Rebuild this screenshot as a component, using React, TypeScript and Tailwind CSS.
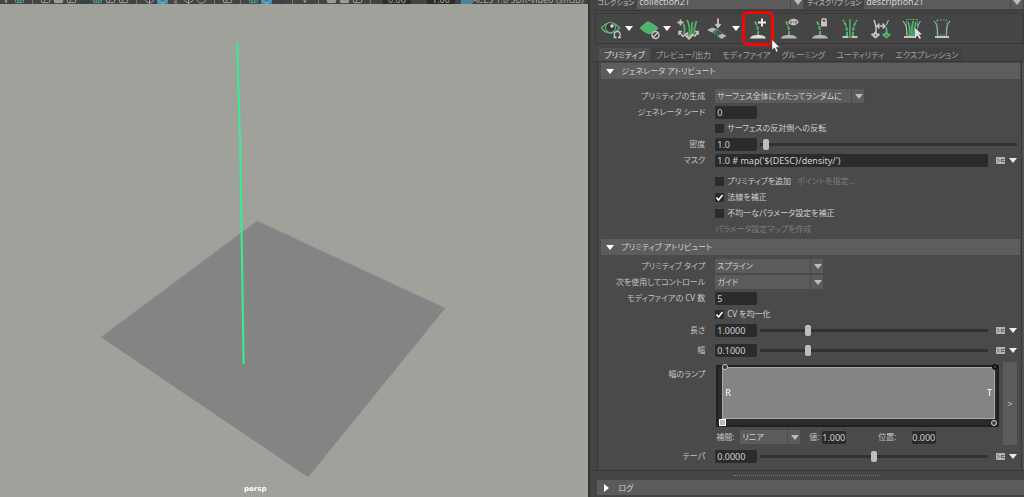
import { useState } from "react";
import type { ReactNode } from "react";
import { Box, Circle, Grid3x3, Image, Lightbulb, MousePointer2, Square } from "lucide-react";

const FONT = "font-['Noto_Sans','Noto_Sans_CJK_JP',sans-serif] [font-feature-settings:'palt']";

type Tool = "sep" | "box" | "grid" | "image" | "dark" | "teal" | "on" | "ball" | "light" | "pick";

const viewTools: Tool[] = [
  "pick", "teal", "sep", "image", "grid", "image", "dark", "teal", "image", "image", "sep", "box", "on", "light",
  "box", "ball", "sep", "image", "sep", "teal", "on", "dark", "sep", "pick", "sep", "grid", "grid", "image", "sep",
];

function ViewTool({ kind }: { kind: Tool }) {
  const size = 11;
  if (kind === "sep") return <span className="h-3 w-px bg-[#777]" />;
  if (kind === "on") {
    return (
      <span className="bg-[#4a83a3] text-[#6fd0d0]">
        <Circle size={size} />
      </span>
    );
  }
  if (kind === "teal") return <Grid3x3 size={size} className="text-[#4fa9a4]" />;
  if (kind === "box") return <Box size={size} />;
  if (kind === "grid") return <Square size={size} fill="#999" />;
  if (kind === "image") return <Image size={size} />;
  if (kind === "dark") return <Square size={size} className="text-[#2d3a40]" />;
  if (kind === "ball") return <Circle size={size} />;
  if (kind === "light") return <Lightbulb size={size} />;
  return <MousePointer2 size={size} />;
}

function Viewport() {
  return (
    <main className="relative flex min-w-0 flex-col bg-[#a1a19c]">
      <div className="flex h-1 shrink-0 items-end overflow-hidden bg-[#434343] text-[9px] leading-[9px] text-[#a8a8a8]">
        {viewTools.map((kind, i) => (
          <span key={i} className="flex w-[13px] shrink-0 justify-center">
            <ViewTool kind={kind} />
          </span>
        ))}
        <span className="ml-1.5 w-7 shrink-0 bg-[#2b2b2b] text-center">0.00</span>
        <span className="ml-4 w-7 shrink-0 bg-[#2b2b2b] text-center">1.00</span>
        <span className="ml-1.5 h-3 w-[11px] shrink-0 bg-[#4a83a3]" />
        <span className="shrink-0">ACES 1.0 SDR-video (sRGB)</span>
      </div>
      <svg viewBox="0 4 588 493" className="min-h-0 w-full flex-1">
        <polygon points="257,221 445,308 308,477 101,337" fill="#858484" />
        <polyline points="101,337 257,221 445,308" fill="none" stroke="#8b9094" strokeWidth="1" />
        <path d="M237 43 L240 140 L243.500 363" fill="none" stroke="#35ee94" strokeWidth="2" strokeLinecap="round" />
      </svg>
      <span className="absolute bottom-0 left-[244px] font-['DejaVu_Sans'] text-[7px] leading-4 font-bold text-white">
        persp
      </span>
    </main>
  );
}

function Down({ className = "" }: { className?: string }) {
  return (
    <svg viewBox="0 0 8 5" className={`h-[5px] w-2 shrink-0 ${className}`}>
      <path d="M0 0H8L4 5Z" fill="currentColor" />
    </svg>
  );
}

type SelectProps = { id: string; value: string; className?: string };

function Select({ id, value, className = "" }: SelectProps) {
  return (
    <div className={`relative h-3.5 bg-[#5b5b5b] ${className}`}>
      <select
        id={id}
        defaultValue={value}
        className="h-full w-full appearance-none border-r border-[#484848] px-0.5 leading-[14px] text-[#d0d0d0] outline-none"
      >
        <option>{value}</option>
      </select>
      <span className="pointer-events-none absolute inset-y-0 right-0 flex w-3.5 items-center justify-center border-l border-[#4b4b4b]">
        <Down className="text-[#bbb]" />
      </span>
    </div>
  );
}

function Field({ id, value, className = "w-[42px] px-0.5" }: { id: string; value: string; className?: string }) {
  return (
    <input
      id={id}
      defaultValue={value}
      className={`h-[13px] min-w-0 rounded-xs bg-[#2b2b2b] text-[9px] leading-[13px] text-[#d0d0d0] outline-none ${className}`}
    />
  );
}

function Slider({ label, value }: { label: string; value: number }) {
  return (
    <input
      type="range"
      aria-label={label}
      defaultValue={value}
      className="ml-[3px] h-[11px] min-w-0 flex-1 appearance-none bg-[linear-gradient(#313131,#313131)] bg-[length:100%_3px] bg-center bg-no-repeat [&::-webkit-slider-thumb]:h-[11px] [&::-webkit-slider-thumb]:w-[6px] [&::-webkit-slider-thumb]:appearance-none [&::-webkit-slider-thumb]:rounded-xs [&::-webkit-slider-thumb]:bg-[#bdbdbd]"
    />
  );
}

function MapMenu() {
  return (
    <>
      <button aria-label="map" className="ml-2 shrink-0">
        <svg viewBox="0 0 9 7" className="h-[7px] w-[9px]">
          <rect width="9" height="7" fill="#b4b4b4" />
          <path d="M1 1.500L3 3.500L1 5.500M8.500 2.500H5.500V4.500H8.500" fill="none" stroke="#4a4a4a" strokeWidth="0.800" />
        </svg>
      </button>
      <button aria-label="menu" className="ml-1 shrink-0">
        <Down className="text-[#eee]" />
      </button>
    </>
  );
}

function Row({ label, id, children }: { label?: string; id?: string; children: ReactNode }) {
  return (
    <div className="grid h-4 grid-cols-[104px_1fr] items-center gap-x-2.5">
      {label ? (
        <label htmlFor={id} className="text-right whitespace-nowrap">
          {label}
        </label>
      ) : (
        <span />
      )}
      <div className="flex min-w-0 items-center">{children}</div>
    </div>
  );
}

function Check({ label, checked = false }: { label: string; checked?: boolean }) {
  const [on, setOn] = useState(checked);
  return (
    <label className="flex items-center gap-[3px] whitespace-nowrap text-[#d0d0d0]">
      <span className="relative size-[9px] bg-[#2b2b2b]">
        <input
          type="checkbox"
          checked={on}
          onChange={() => setOn(!on)}
          className="absolute inset-0 size-full appearance-none"
        />
        {on && (
          <svg viewBox="0 0 9 9" className="pointer-events-none absolute inset-0 size-full">
            <path d="M1.500 4.500L3.500 7L7.500 2" fill="none" stroke="#fff" strokeWidth="1.500" />
          </svg>
        )}
      </span>
      {label}
    </label>
  );
}

function SectionTitle({ children }: { children: string }) {
  return (
    <h2 className="flex h-4 items-center gap-[7px] bg-[#5d5d5d] pl-[5px] text-[#d4d4d4]">
      <Down className="text-white" />
      {children}
    </h2>
  );
}

const GREEN = "#4fb36a";

function Icon({ children }: { children: ReactNode }) {
  return (
    <svg viewBox="0 0 24 24" className="size-6 shrink-0" fill="none" stroke="#c4c4c4" strokeWidth="1.500">
      {children}
    </svg>
  );
}

function Mound({ fill = "#b5b5b5" }: { fill?: string }) {
  return <path d="M4 21.500C5 18.500 8 18 12 18S19 18.500 20 21.500Z" fill={fill} stroke="none" />;
}

function Blade() {
  return <path d="M12 18C12.500 13 11.500 8 8.500 4" stroke={GREEN} strokeWidth="2" strokeDasharray="4 1" />;
}

function Toolbar() {
  return (
    <div className="relative mt-0.5 ml-[5px] flex h-[31px] shrink-0 items-center border border-[#393939] bg-[#454545] pl-1">
      <button aria-label="preview" className="flex w-[38px] shrink-0 items-center gap-px">
        <Icon>
          <path d="M1.500 11C6 4.500 15 4.500 19.500 11C15 17.500 6 17.500 1.500 11Z" stroke={GREEN} strokeWidth="1.500" />
          <circle cx="10.500" cy="10.500" r="5" fill="#3c3c3c" stroke="#8fae98" strokeWidth="1" />
          <circle cx="12" cy="9" r="1.700" fill="#ddd" stroke="none" />
          <path d="M15.500 20.500C13 17.500 14.500 14.500 17.500 14.500S21.500 18 18.500 20.500M13.500 20.500H16.500M21 20.500H18" strokeWidth="1.300" />
        </Icon>
        <Down className="text-white" />
      </button>
      <button aria-label="clear preview" className="flex w-[38px] shrink-0 items-center gap-px">
        <Icon>
          <path d="M1.500 11C6 7 8 4.500 10 4.500S16 7 20.500 11C17 15 13 17 11 17S6 15 1.500 11Z" fill={GREEN} stroke="none" />
          <circle cx="17.500" cy="18" r="3.500" fill="#454545" />
          <path d="M15 20.500L20 15.500" />
        </Icon>
        <Down className="text-white" />
      </button>
      <button aria-label="add guides" className="w-7 shrink-0">
        <Icon>
          <path d="M3 14.500L7 19.500L11 16L13 21.500L16 17L19 19L22 14.500M3 18V14.500H6M22 18V14.500H19M9 18L13 22L17 18" strokeWidth="1.500" />
          <path d="M8 17C9 13 9 10 7.500 7M13 20C14 14 14 8 11 3M18 17C18 13 18.500 9 20.500 4M15.500 17C16 12 15.500 8 16.500 5" stroke={GREEN} strokeWidth="1.800" />
          <path d="M1.500 5.500H7.500M4.500 2.500V8.500" strokeWidth="1.800" />
        </Icon>
      </button>
      <button aria-label="place guides" className="flex w-[39px] shrink-0 items-center gap-1">
        <Icon>
          <path d="M14 1.500V9M11.500 7L14 10L16.500 7" strokeWidth="1.800" />
          <path d="M3 13L8 10.500L13 12L8 15.500ZM13.500 19L18.500 16.500L22.500 19L17.500 22Z" fill="#b5b5b5" stroke="none" />
          <path d="M8 15L14 19M13 12L18.500 16.500M10 13.500L16 17.500M10 16L14 13" stroke={GREEN} strokeWidth="1" strokeDasharray="2 1" />
        </Icon>
        <Down className="text-white" />
      </button>
      <button aria-label="add guide" className="relative flex h-full w-[30px] shrink-0 items-center justify-center">
        <Icon>
          <Mound fill="#ddd" />
          <Blade />
          <path d="M12 5.500H20M16 1.500V9.500" stroke="#eee" strokeWidth="2" />
        </Icon>
        <span className="absolute -inset-x-px -inset-y-[3px] rounded-md border-[3px] border-[#f90400]" />
        <svg viewBox="0 0 9 14" className="absolute top-[25px] left-7 z-10 h-3.5 w-[9px]">
          <path d="M1 0.500V11L3.500 8.800L5.300 13L7 12.200L5.200 8.300H8.500Z" fill="#fff" stroke="#444" strokeWidth="0.500" />
        </svg>
      </button>
      <button aria-label="show guide" className="flex w-[31px] shrink-0 justify-center">
        <Icon>
          <Mound />
          <Blade />
          <path d="M12 5C14 1.500 19 1.500 21 5C19 8.500 14 8.500 12 5Z" />
          <circle cx="16.500" cy="5" r="1.500" />
        </Icon>
      </button>
      <button aria-label="lock guide" className="flex w-[31px] shrink-0 justify-center">
        <Icon>
          <Mound />
          <Blade />
          <rect x="13" y="4.500" width="6" height="5" fill="#c4c4c4" stroke="none" />
          <path d="M14 5V3.500C14 1.300 18 1.300 18 3.500V5" />
        </Icon>
      </button>
      <button aria-label="mirror" className="flex w-[30px] shrink-0 justify-center">
        <Icon>
          <path d="M4.500 20H10.500M13.500 20H19.500" strokeWidth="2" />
          <path d="M12 2V21" stroke={GREEN} strokeWidth="1.500" />
          <path d="M9 19C9.500 13 8 7 5 3M15 19C14.500 13 16 7 19 3" stroke={GREEN} strokeWidth="2" strokeDasharray="4 1" />
        </Icon>
      </button>
      <button aria-label="copy" className="flex w-[31px] shrink-0 justify-center">
        <Icon>
          <path d="M6.500 17C8 12 7 8 5 3M8 9H16M10.500 6.500L8 9L10.500 11.500M13.500 6.500L16 9L13.500 11.500" />
          <path d="M2.500 17L6.500 20.500L10.500 17M4 18.500L6.500 15.500L9 18.500" strokeWidth="2" />
          <path d="M16.500 10C18 12 18 14 17.500 18M13.500 17L17.500 20.500L21.500 17M15 18.500L17.500 15.500L20 18.500" stroke={GREEN} strokeWidth="2" />
          <path d="M19.500 3L17.500 8" strokeWidth="1" />
        </Icon>
      </button>
      <button aria-label="select guides" className="flex w-[31px] shrink-0 justify-center">
        <Icon>
          <path d="M4 20H16" strokeWidth="2" />
          <rect x="6.500" y="2.500" width="11" height="16" stroke={GREEN} strokeWidth="1" strokeDasharray="2 1" />
          <path d="M9.500 19C10 13 9.500 8 8 5M12 19C11.500 12 12 7 13.500 4M14 18C14 12 15 8 16 5" stroke={GREEN} strokeWidth="1.800" />
          <path d="M7 18C7 12 6 7 3 4M18 10C18 8 19 6 20.500 4" strokeWidth="1" />
          <path d="M15 11V21L17.500 18.500L19.500 22L21 21L19 17.500H22Z" fill="#ddd" stroke="none" />
        </Icon>
      </button>
      <button aria-label="region" className="flex w-[30px] shrink-0 justify-center">
        <Icon>
          <path d="M5 20H19" strokeWidth="2" />
          <path d="M7.500 19C8 12 7 7 4 4M16.500 19C16 12 17 7 20 4" strokeWidth="1" />
          <rect x="7" y="3" width="10" height="15" stroke={GREEN} strokeWidth="1" strokeDasharray="2 1" />
        </Icon>
      </button>
    </div>
  );
}

const tabs = ["プリミティブ", "プレビュー/出力", "モディファイア", "グルーミング", "ユーティリティ", "エクスプレッション"];

function Tabs() {
  const [active, setActive] = useState(tabs[0]);
  return (
    <nav className="mt-1 ml-[9px] flex h-[13px] shrink-0 gap-px whitespace-nowrap">
      {tabs.map((tab) => (
        <button
          key={tab}
          onClick={() => setActive(tab)}
          className={`rounded-t-xs px-[5px] ${tab === active ? "bg-[#505050] text-[#e0e0e0]" : "bg-[#414141] text-[#a4a4a4]"}`}
        >
          {tab}
        </button>
      ))}
    </nav>
  );
}

function Ramp() {
  return (
    <div className="mt-[3px] h-[62px] border-2 border-[#202020] bg-[#2b2b2b]">
      <div className="relative mr-0.5 ml-1 flex h-[52px] items-center justify-between border border-[#a9a9a9] bg-[#858384] px-0.5 text-[9px] text-white">
        <span>R</span>
        <span>T</span>
        <span className="absolute -top-1 -left-px size-1.5 rounded-full border border-[#ccc] bg-[#333]" />
        <span className="absolute -top-1 -right-1 size-1.5 rounded-full border border-black bg-[#333]" />
        <span className="absolute -bottom-2 -left-1 size-[7px] border border-white bg-[#bbb]" />
        <span className="absolute -right-[3px] -bottom-2 size-1.5 rounded-full border border-[#ccc] bg-[#444]" />
      </div>
    </div>
  );
}

function Attributes() {
  return (
    <div className="flex min-h-0 flex-1 border-t border-b border-[#363636]">
      <div className="ml-[7px] min-w-0 flex-1 border-l border-[#363636] bg-[#4a4a4a] pt-px pr-px pb-1.5 pl-[3px]">
        <SectionTitle>ジェネレータ アトリビュート</SectionTitle>
        <div className="pt-[9px] pr-[3px] pb-0.5">
          <Row label="プリミティブの生成" id="generation">
            <Select id="generation" value="サーフェス全体にわたってランダムに" className="w-[150px]" />
          </Row>
          <Row label="ジェネレータ シード" id="seed">
            <Field id="seed" value="0" />
          </Row>
          <Row>
            <Check label="サーフェスの反対側への反転" />
          </Row>
          <Row label="密度" id="density">
            <Field id="density" value="1.0" />
            <Slider label="密度" value={1} />
          </Row>
          <Row label="マスク" id="mask">
            <Field id="mask" value="1.0 # map('${DESC}/density/')" className="flex-1 px-0.5" />
            <MapMenu />
          </Row>
          <div className="mt-[5px]">
            <Row>
              <Check label="プリミティブを追加" />
              <button disabled className="ml-1.5 whitespace-nowrap text-[#7e7e7e]">
                ポイントを指定...
              </button>
            </Row>
          </div>
          <Row>
            <Check label="法線を補正" checked />
          </Row>
          <Row>
            <Check label="不均一なパラメータ設定を補正" />
          </Row>
          <Row>
            <button disabled className="whitespace-nowrap text-[#7e7e7e]">
              パラメータ設定マップを作成
            </button>
          </Row>
        </div>
        <SectionTitle>プリミティブ アトリビュート</SectionTitle>
        <div className="pt-[3px] pr-[3px]">
          <Row label="プリミティブ タイプ" id="type">
            <Select id="type" value="スプライン" className="w-[109px]" />
          </Row>
          <Row label="次を使用してコントロール" id="control">
            <Select id="control" value="ガイド" className="w-[109px]" />
          </Row>
          <Row label="モディファイアの CV 数" id="cv">
            <Field id="cv" value="5" />
          </Row>
          <Row>
            <Check label="CV を均一化" checked />
          </Row>
          <Row label="長さ" id="length">
            <Field id="length" value="1.0000" />
            <Slider label="長さ" value={20} />
            <MapMenu />
          </Row>
          <div className="my-1">
            <Row label="幅" id="width">
              <Field id="width" value="0.1000" />
              <Slider label="幅" value={20} />
              <MapMenu />
            </Row>
          </div>
          <div className="grid grid-cols-[104px_1fr_14px] gap-x-1">
            <span className="pt-1 text-right leading-4">幅のランプ</span>
            <div className="pl-[7px]">
              <Ramp />
              <div className="mt-0.5 flex h-4 items-center whitespace-nowrap">
                <label htmlFor="interp" className="w-6 shrink-0">
                  補間:
                </label>
                <Select id="interp" value="リニア" className="w-[61px]" />
                <label htmlFor="value" className="ml-2 w-[13px] shrink-0">
                  値:
                </label>
                <Field id="value" value="1.000" className="w-6" />
                <label htmlFor="position" className="mr-2.5 ml-8 w-6 shrink-0">
                  位置:
                </label>
                <Field id="position" value="0.000" className="w-6" />
              </div>
            </div>
            <button className="bg-[#5b5b5b] text-[9px]">&gt;</button>
          </div>
          <div className="mt-[3px]">
            <Row label="テーパ" id="taper">
              <Field id="taper" value="0.0000" />
              <Slider label="テーパ" value={50} />
              <MapMenu />
            </Row>
          </div>
        </div>
      </div>
      <div className="w-[3px] border-l border-[#363636] bg-[#525252]" />
    </div>
  );
}

function SidePanel() {
  return (
    <aside className="flex min-w-0 flex-col border-l-2 border-[#353535] bg-[#454545]">
      <div className="flex h-[11px] shrink-0 items-end overflow-hidden border-b border-[#3a3a3a] pb-px pl-[7px] text-[7px] whitespace-nowrap">
        <label htmlFor="collection" className="w-10 shrink-0">
          コレクション
        </label>
        <Select id="collection" value="collection21" className="w-[167px] shrink-0 text-[9px]" />
        <label htmlFor="description" className="ml-[3px] w-[57px] shrink-0">
          ディスクリプション
        </label>
        <Select id="description" value="description21" className="min-w-0 flex-1 text-[9px]" />
      </div>
      <Toolbar />
      <Tabs />
      <Attributes />
      <div className="flex h-[9px] shrink-0 items-center justify-center">
        <span className="w-[146px] border-t border-dotted border-[#777]" />
      </div>
      <button className="mb-0.5 ml-[7px] flex h-[15px] shrink-0 items-center gap-[9px] bg-[#5b5b5b] pl-[7px] text-[#d4d4d4]">
        <svg viewBox="0 0 5 8" className="h-2 w-[5px]">
          <path d="M0 0L5 4L0 8Z" fill="#fff" />
        </svg>
        ログ
      </button>
    </aside>
  );
}

export default function App() {
  return (
    <div className={`grid h-screen grid-cols-[27fr_20fr] overflow-hidden text-[8px] leading-3 text-[#c4c4c4] ${FONT}`}>
      <Viewport />
      <SidePanel />
    </div>
  );
}
